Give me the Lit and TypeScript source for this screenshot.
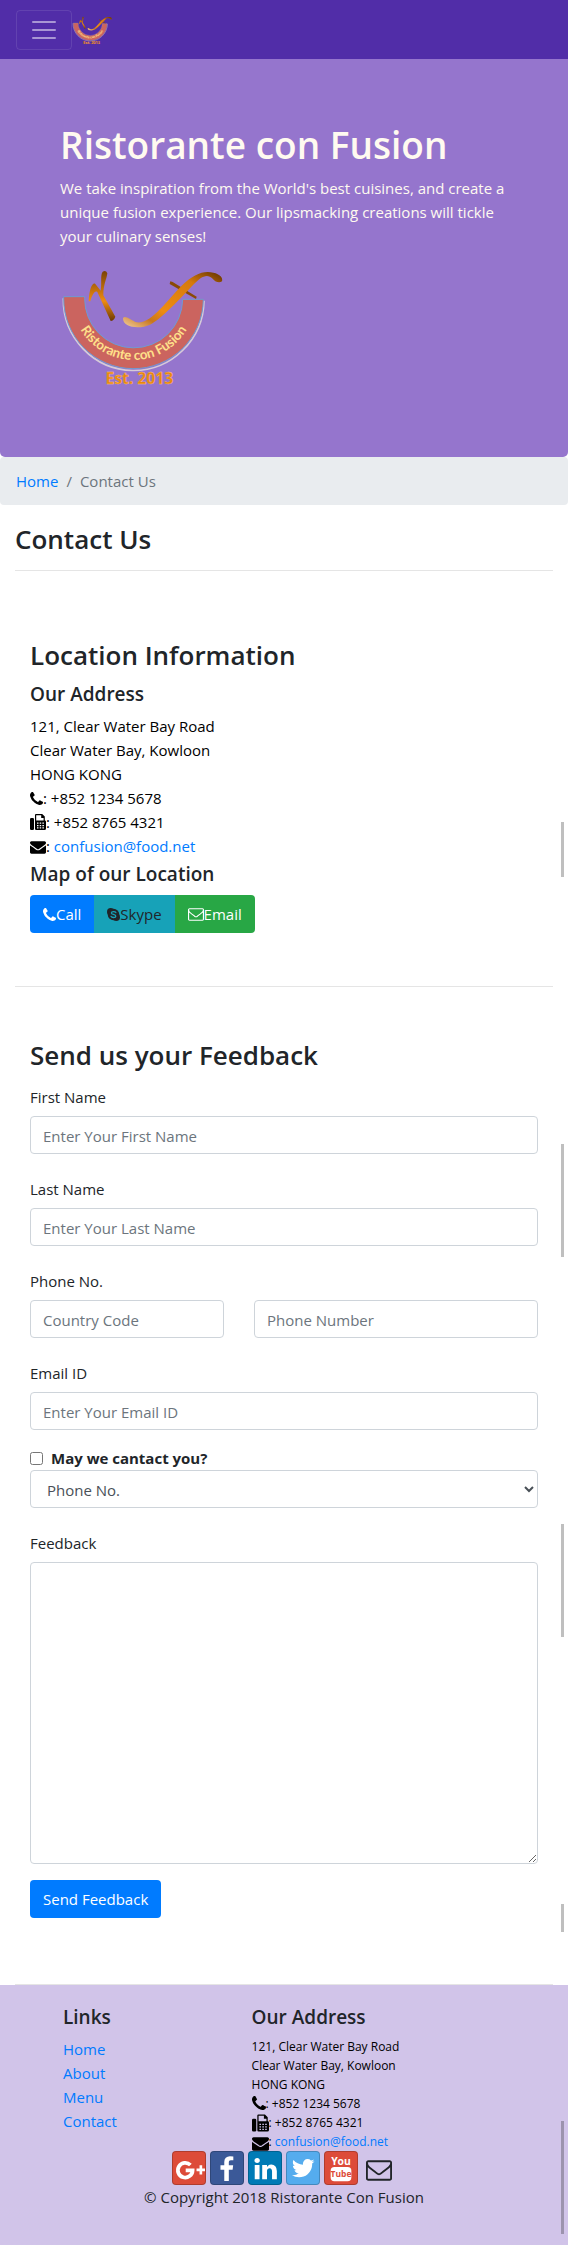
import { LitElement, html, css, svg } from "lit";
import { customElement } from "lit/decorators.js";

const PHONE =
  "M1600 1240q0 27-10 70.5t-21 68.5q-21 50-122 106-94 51-186 51-27 0-53-3.5t-57.5-12.5-47-14.5-55.5-20.5-49-18q-98-35-175-83-127-79-264-216t-216-264q-48-77-83-175-3-9-18-49t-20.5-55.5-14.5-47-12.5-57.5-3.5-53q0-92 51-186 56-101 106-122 25-11 68.5-21t70.5-10q14 0 21 3 18 6 53 76 11 19 30 54t35 63.5 31 53.5q3 4 17.5 25t21.5 35.5 7 28.5q0 20-28.5 50t-62 55-62 53-28.5 46q0 9 5 22.5t8.5 20.5 14 24 11.5 19q76 137 174 235t235 174q2 1 19 11.5t24 14 20.5 8.5 22.5 5q18 0 46-28.5t53-62 55-62 50-28.5q14 0 28.5 7t35.5 21.5 25 17.5q25 15 53.5 31t63.5 35 54 30q70 35 76 53 3 7 3 21z";
const ENVELOPE =
  "M1792 710v794q0 66-47 113t-113 47h-1472q-66 0-113-47t-47-113v-794q44 49 101 87 362 246 497 345 57 42 92.5 65.5t94.5 48 110 24.5h2q51 0 110-24.5t94.5-48 92.5-65.5q170-123 498-345 57-39 100-87zm0-294q0 79-49 151t-122 123q-376 261-468 325-10 7-42.5 31t-54 38.5-52 32.5-57.5 27-50 9h-2q-23 0-50-9t-57.5-27-52-32.5-54-38.5-42.5-31q-91-64-262-182.5t-205-142.5q-62-42-117-115.5t-55-136.5q0-78 41.5-130t118.5-52h1472q65 0 112.5 47t47.5 113z";
const ENVELOPE_O =
  "M1664 1504v-768q-32 36-69 66-268 206-426 338-51 43-83 67t-86.5 48.5-102.5 24.5h-2q-48 0-102.5-24.5t-86.5-48.5-83-67q-158-132-426-338-37-30-69-66v768q0 13 9.5 22.5t22.5 9.5h1472q13 0 22.5-9.5t9.5-22.5zm0-1051v-24.5l-.5-13-3-12.5-5.5-9-9-7.5-14-2.5h-1472q-13 0-22.5 9.5t-9.5 22.5q0 168 147 284 193 152 401 317 6 5 35 29.5t46 37.5 44.5 31.5 50.5 27.5 43 9h2q20 0 43-9t50.5-27.5 44.5-31.5 46-37.5 35-29.5q208-165 401-317 54-43 100.5-115.5t46.5-131.5zm128-37v1088q0 66-47 113t-113 47h-1472q-66 0-113-47t-47-113v-1088q0-66 47-113t113-47h1472q66 0 113 47t47 113z";
const FACEBOOK =
  "M1343 12v264h-157q-86 0-116 36t-30 108v189h293l-39 296h-254v759h-306v-759h-255v-296h255v-218q0-186 104-288.5t277-102.5q147 0 228 12z";
const LINKEDIN =
  "M477 625v991h-330v-991h330zm21-306q1 73-50.5 122t-135.5 49h-2q-82 0-132-49t-50-122q0-74 51.5-122.5t134.5-48.5 133 48.5 51 122.5zm1166 729v568h-329v-530q0-105-40.5-164.5t-126.5-59.5q-63 0-105.5 34.5t-63.5 85.5q-11 30-11 81v553h-329q2-399 2-647t-1-296l-1-48h329v144h-2q20-32 41-56t56.5-52 87-43.5 114.5-15.5q171 0 275 113.5t104 332.5z";
const TWITTER =
  "M1684 408q-67 98-162 167 1 14 1 42 0 130-38 259.5t-115.5 248.5-184.5 210.5-258 146-323 54.5q-271 0-496-145 35 4 78 4 225 0 401-138-105-2-188-64.5t-114-159.5q33 5 61 5 43 0 85-11-112-23-185.5-111.5t-73.5-205.5v-4q68 38 146 41-66-44-105-115t-39-154q0-88 44-163 121 149 294.5 238.5t371.5 99.5q-8-38-8-74 0-134 94.5-228.5t228.5-94.5q140 0 236 102 109-21 205-78-37 115-142 178 93-10 186-50z";

const phoneIcon = html`<svg class="icon narrow" viewBox="192 128 1408 1408" aria-hidden="true"><path d=${PHONE} /></svg>`;
const mailIcon = html`<svg class="icon flat" viewBox="0 256 1792 1408" aria-hidden="true"><path d=${ENVELOPE} /></svg>`;
const mailOutline = html`<svg class="icon flat" viewBox="0 256 1792 1408" aria-hidden="true"><path d=${ENVELOPE_O} /></svg>`;
const faxIcon = html`<svg class="icon" viewBox="0 0 16 16" aria-hidden="true">
  <rect x="0" y="4" width="4" height="12" rx="1.2" />
  <path fill-rule="evenodd" d="M5 1a1 1 0 0 1 1-1h6.2l2.6 2.6V6.2A1.6 1.6 0 0 1 16 7.6v6.9a1.5 1.5 0 0 1-1.5 1.5H6.2A1.2 1.2 0 0 1 5 14.8zM6.2 1.2v5.2h7.4V4h-2.4V1.2zM7 8.6v1.2h1.5V8.6zM9.7 8.6v1.2h1.5V8.6zM12.4 8.6v1.2h1.5V8.6zM7 11v1.2h1.5V11zM9.7 11v1.2h1.5V11zM12.4 11v1.2h1.5V11zM7 13.3v1.2h1.5v-1.2zM9.7 13.3v1.2h1.5v-1.2zM12.4 13.3v1.2h1.5v-1.2z" />
</svg>`;
const skypeIcon = html`<svg class="icon narrow" viewBox="0 0 14 14" aria-hidden="true">
  <circle cx="4" cy="4" r="4" /><circle cx="10" cy="10" r="4" /><circle cx="7" cy="7" r="6.2" />
  <path d="M9.5 4.9C8.9 3.7 4.8 3.5 4.7 5.3C4.7 7.2 9.5 6.5 9.5 8.8C9.4 10.7 5 10.6 4.3 9" fill="none" stroke="#17a2b8" stroke-width="1.4" stroke-linecap="round" />
</svg>`;

@customElement("fusion-logo")
export class FusionLogo extends LitElement {
  static styles = css`
    :host {
      display: block;
    }
    svg {
      display: block;
      width: 100%;
      height: 100%;
      overflow: visible;
    }
    .name {
      font: bold 40px Lato, sans-serif;
      fill: #ffe08a;
    }
    .est {
      font: bold 47px "Open Sans", sans-serif;
      fill: #e8860c;
      stroke: #ffc477;
      stroke-width: 1;
    }
  `;
  render() {
    return html`<svg viewBox="60 40 498 369" role="img" aria-label="Ristorante con Fusion logo">
      <defs>
        <linearGradient id="swash" x1="0" y1="1" x2="1" y2="0">
          <stop offset="0" stop-color="#f3cfa0" />
          <stop offset="0.2" stop-color="#c8761c" />
          <stop offset="0.35" stop-color="#ee8c12" />
          <stop offset="0.75" stop-color="#d67a0c" />
          <stop offset="1" stop-color="#5e3002" />
        </linearGradient>
        <linearGradient id="twig" x1="0" y1="0" x2="0" y2="1">
          <stop offset="0" stop-color="#7a4205" />
          <stop offset="0.6" stop-color="#ee8c12" />
          <stop offset="1" stop-color="#6b3903" />
        </linearGradient>
        <path id="curve" d="M96 143A185 185 0 0 0 466 143" />
      </defs>
      <path d="M70 143A211 213 0 0 0 492 150" fill="none" stroke="#d6cbd8" stroke-width="5" />
      <path d="M71 138H134V143A147 147 0 0 0 428 146H490A209.5 209.5 0 0 1 71 143Z" fill="#cb645f" stroke="#6f9bd2" stroke-width="3" />
      <text class="name" text-anchor="middle"><textPath href="#curve" startOffset="50%">Ristorante con Fusion</textPath></text>
      <text class="est" x="298" y="400" text-anchor="middle">Est. 2013</text>
      <path d="M146 152C148 112 158 94 166 100L182 120C186 96 180 74 188 63Q198 58 202 68C200 86 190 100 190 134L226 198Q222 210 212 211L172 124C164 118 156 134 151 152Z" fill="url(#twig)" />
      <path d="M391 92L398 94L470 138L468 145L389 100Z" fill="#8a4a06" />
      <path d="M249 202C256 194 270 206 286 214C330 226 380 150 424 106C460 70 492 58 520 66C540 70 550 82 546 92C538 98 526 94 518 84C500 66 482 80 462 100C420 144 366 204 330 222C300 236 248 232 249 202Z" fill="url(#swash)" />
    </svg>`;
  }
}

interface Social {
  label: string;
  bg: string;
  glyph: unknown;
}
const SOCIALS: Social[] = [
  {
    label: "Google+",
    bg: "google",
    glyph: svg`<path d="M18.5 13.8A7.8 7.8 0 1 0 20.8 19.5H13.5" fill="none" stroke="currentColor" stroke-width="4" /><path d="M25 17.5h3.2v-3.5h2.8v3.5H34v3h-3v3.5h-2.8v-3.5H25z" />`,
  },
  { label: "Facebook", bg: "facebook", glyph: svg`<path transform="translate(2.5 4.5) scale(.0158)" d=${FACEBOOK} />` },
  { label: "LinkedIn", bg: "linkedin", glyph: svg`<path transform="translate(3.8 4) scale(.0155)" d=${LINKEDIN} />` },
  { label: "Twitter", bg: "twitter", glyph: svg`<path transform="translate(3.6 3.6) scale(.0152)" d=${TWITTER} />` },
  {
    label: "YouTube",
    bg: "google",
    glyph: svg`<text class="you" x="17" y="14" text-anchor="middle">You</text><rect x="6" y="16" width="22" height="15" rx="4" /><text class="tube" x="17" y="27" text-anchor="middle">Tube</text>`,
  },
];

@customElement("app-root")
export class AppRoot extends LitElement {
  static styles = css`
    :host {
      display: block;
      position: relative;
      background: #fff;
      color: #212529;
      font: 15px/24px "Open Sans", "Noto Sans", sans-serif;
    }
    * {
      box-sizing: border-box;
    }
    a {
      color: #007bff;
      text-decoration: none;
    }
    h1,
    h3,
    h5,
    p,
    address {
      margin: 0;
      font-style: normal;
    }
    h1 {
      font-size: 37px;
      line-height: 50px;
      font-weight: 600;
      margin-bottom: 6px;
    }
    h3 {
      font-size: 26px;
      line-height: 36px;
      font-weight: 600;
      margin-bottom: 8px;
    }
    h5 {
      font-size: 19px;
      line-height: 26px;
      font-weight: 600;
      margin-bottom: 7px;
    }
    .navbar {
      display: flex;
      align-items: center;
      padding: 10px 16px 9px;
      background: #512da8;
    }
    .toggler {
      display: flex;
      padding: 4px 12px;
      border: 1px solid rgba(255, 255, 255, 0.1);
      border-radius: 4px;
      background: none;
      color: rgba(255, 255, 255, 0.5);
    }
    .brand-logo {
      width: 41px;
      height: 30px;
    }
    .hero {
      padding: 61px 52px 70px 60px;
      background: #9575cd;
      color: #fffaf0;
      border-radius: 0 0 5px 5px;
    }
    .hero-logo {
      width: 166px;
      height: 123px;
      margin-top: 16px;
    }
    .breadcrumb {
      display: flex;
      gap: 8px;
      margin: 0;
      padding: 12px 16px;
      list-style: none;
      background: #e9ecef;
      border-radius: 4px;
      color: #6c757d;
    }
    .breadcrumb li + li::before {
      content: "/";
      padding-right: 8px;
    }
    .container {
      padding: 16px 15px 0;
    }
    .container > h3 {
      margin-bottom: 13px;
    }
    .section {
      padding: 66px 15px 53px;
      border-top: 1px solid #e5e5e5;
    }
    .feedback {
      padding: 50px 15px 66px;
      border-bottom: 1px solid #e5e5e5;
    }
    .feedback h3 {
      margin-bottom: 5px;
    }
    .address {
      color: #000;
      margin-bottom: 3px;
    }
    .address span {
      display: block;
      height: 24px;
    }
    .icon {
      width: 16px;
      height: 16px;
      fill: currentColor;
      vertical-align: -2px;
    }
    .icon.narrow {
      width: 13px;
      height: 13px;
      vertical-align: -1px;
    }
    .icon.flat {
      height: 13px;
    }
    .group {
      display: flex;
      width: fit-content;
      margin-top: 8px;
      border-radius: 4px;
      overflow: hidden;
    }
    .btn {
      display: flex;
      align-items: center;
      padding: 7px 13px;
      color: #fff;
      font: inherit;
      border: 0;
      background: #007bff;
    }
    .btn.skype {
      background: #17a2b8;
      color: #212529;
    }
    .btn.email {
      background: #28a745;
    }
    .submit {
      border-radius: 4px;
    }
    .field {
      display: grid;
      margin-bottom: 16px;
    }
    .label {
      padding: 7px 0;
    }
    .control {
      width: 100%;
      min-width: 0;
      height: 38px;
      margin: 0;
      padding: 7px 12px 5px;
      border: 1px solid #ced4da;
      border-radius: 4px;
      background: #fff;
      color: #495057;
      font: inherit;
    }
    .control::placeholder {
      color: #6c757d;
      opacity: 1;
    }
    .phones {
      display: grid;
      grid-template-columns: 194fr 284fr;
      gap: 30px;
    }
    .check {
      display: flex;
      align-items: center;
      gap: 8px;
      font-weight: 700;
    }
    .check input {
      width: 13px;
      height: 13px;
      margin: 0;
    }
    select.control {
      padding-right: 0;
    }
    textarea.control {
      display: block;
      height: auto;
    }
    .footer {
      padding: 19px 47px 36px;
      background: #d1c4e9;
    }
    .cols {
      display: grid;
      grid-template-columns: 7fr 10fr;
      padding-left: 16px;
    }
    .cols ul {
      margin: 0;
      padding: 0;
      list-style: none;
    }
    .cols .address {
      font-size: 12px;
      line-height: 19px;
      margin: 0;
    }
    .cols .icon {
      width: 17px;
      height: 18px;
      vertical-align: -5px;
    }
    .cols .icon.narrow {
      width: 14px;
      height: 14px;
      vertical-align: -2px;
    }
    .cols .icon.flat {
      height: 14px;
    }
    .cols .address span {
      height: 19px;
    }
    .social {
      display: flex;
      justify-content: center;
      align-items: center;
      gap: 4px;
      height: 34px;
    }
    .tile {
      display: block;
      width: 34px;
      height: 34px;
      border: 1px solid rgba(0, 0, 0, 0.2);
      border-radius: 4px;
      color: #fff;
    }
    .tile svg {
      display: block;
      width: 100%;
      fill: currentColor;
    }
    .google {
      background: #dd4b39;
    }
    .facebook {
      background: #3b5998;
    }
    .linkedin {
      background: #007bb6;
    }
    .twitter {
      background: #55acee;
    }
    .you {
      font: bold 11px "Open Sans", sans-serif;
    }
    .tube {
      font: bold 9px "Open Sans", sans-serif;
      fill: #dd4b39;
    }
    .mail {
      display: flex;
      padding: 4px 4px 0;
      color: #212529;
    }
    .mail .icon.flat {
      width: 26px;
      height: 21px;
    }
    .copy {
      text-align: center;
    }
    .thumb {
      position: absolute;
      right: 4px;
      width: 3px;
      background: rgba(0, 0, 0, 0.25);
    }
    .t1 {
      top: 822px;
      height: 55px;
    }
    .t2 {
      top: 1144px;
      height: 113px;
    }
    .t3 {
      top: 1524px;
      height: 113px;
    }
    .t4 {
      top: 1904px;
      height: 28px;
    }
    .t5 {
      top: 2121px;
      height: 113px;
    }
  `;

  private address() {
    return html`<address class="address">
      <span>121, Clear Water Bay Road</span>
      <span>Clear Water Bay, Kowloon</span>
      <span>HONG KONG</span>
      <span>${phoneIcon}: +852 1234 5678</span>
      <span>${faxIcon}: +852 8765 4321</span>
      <span>${mailIcon}: <a href="mailto:confusion@food.net">confusion@food.net</a></span>
    </address>`;
  }

  private textField(id: string, label: string, placeholder: string, type = "text") {
    return html`<div class="field">
      <label class="label" for=${id}>${label}</label>
      <input class="control" id=${id} type=${type} placeholder=${placeholder} />
    </div>`;
  }

  render() {
    return html`
      <nav class="navbar">
        <button class="toggler" type="button" aria-label="Toggle navigation">
          <svg width="30" height="30" viewBox="0 0 30 30" stroke="currentColor" stroke-width="2" stroke-linecap="round" stroke-miterlimit="10">
            <path d="M4 7h22M4 15h22M4 23h22" />
          </svg>
        </button>
        <a href="#home" aria-label="Ristorante con Fusion"><fusion-logo class="brand-logo"></fusion-logo></a>
      </nav>
      <header class="hero">
        <h1>Ristorante con Fusion</h1>
        <p>
          We take inspiration from the World's best cuisines, and create a unique fusion experience. Our lipsmacking
          creations will tickle your culinary senses!
        </p>
        <fusion-logo class="hero-logo"></fusion-logo>
      </header>
      <ol class="breadcrumb">
        <li><a href="#home">Home</a></li>
        <li>Contact Us</li>
      </ol>
      <main class="container">
        <h3>Contact Us</h3>
        <section class="section">
          <h3>Location Information</h3>
          <h5>Our Address</h5>
          ${this.address()}
          <h5>Map of our Location</h5>
          <div class="group" role="group">
            <a class="btn" href="tel:+85212345678">${phoneIcon}Call</a>
            <a class="btn skype" href="#skype">${skypeIcon}Skype</a>
            <a class="btn email" href="mailto:confusion@food.net">${mailOutline}Email</a>
          </div>
        </section>
        <section class="section feedback">
          <h3>Send us your Feedback</h3>
          <form>
            ${this.textField("firstname", "First Name", "Enter Your First Name")}
            ${this.textField("lastname", "Last Name", "Enter Your Last Name")}
            <div class="field">
              <label class="label" for="telnum">Phone No.</label>
              <div class="phones">
                <input class="control" type="tel" aria-label="Country Code" placeholder="Country Code" />
                <input class="control" id="telnum" type="tel" placeholder="Phone Number" />
              </div>
            </div>
            ${this.textField("emailid", "Email ID", "Enter Your Email ID", "email")}
            <div class="field">
              <label class="check"><input type="checkbox" />May we cantact you?</label>
              <select class="control" aria-label="Contact method">
                <option>Phone No.</option>
                <option>Email</option>
              </select>
            </div>
            <div class="field">
              <label class="label" for="feedback">Feedback</label>
              <textarea class="control" id="feedback" rows="12"></textarea>
            </div>
            <button class="btn submit" type="button">Send Feedback</button>
          </form>
        </section>
      </main>
      <footer class="footer">
        <div class="cols">
          <div>
            <h5>Links</h5>
            <ul>
              <li><a href="#home">Home</a></li>
              <li><a href="#about">About</a></li>
              <li><a href="#menu">Menu</a></li>
              <li><a href="#contact">Contact</a></li>
            </ul>
          </div>
          <div>
            <h5>Our Address</h5>
            ${this.address()}
          </div>
        </div>
        <div class="social">
          ${SOCIALS.map(
            (s) => html`<a class="tile ${s.bg}" href="#social" aria-label=${s.label}><svg viewBox="0 0 34 34">${s.glyph}</svg></a>`
          )}
          <a class="mail" href="mailto:confusion@food.net" aria-label="Email">${mailOutline}</a>
        </div>
        <p class="copy">© Copyright 2018 Ristorante Con Fusion</p>
      </footer>
      <div class="thumb t1"></div>
      <div class="thumb t2"></div>
      <div class="thumb t3"></div>
      <div class="thumb t4"></div>
      <div class="thumb t5"></div>
    `;
  }
}
